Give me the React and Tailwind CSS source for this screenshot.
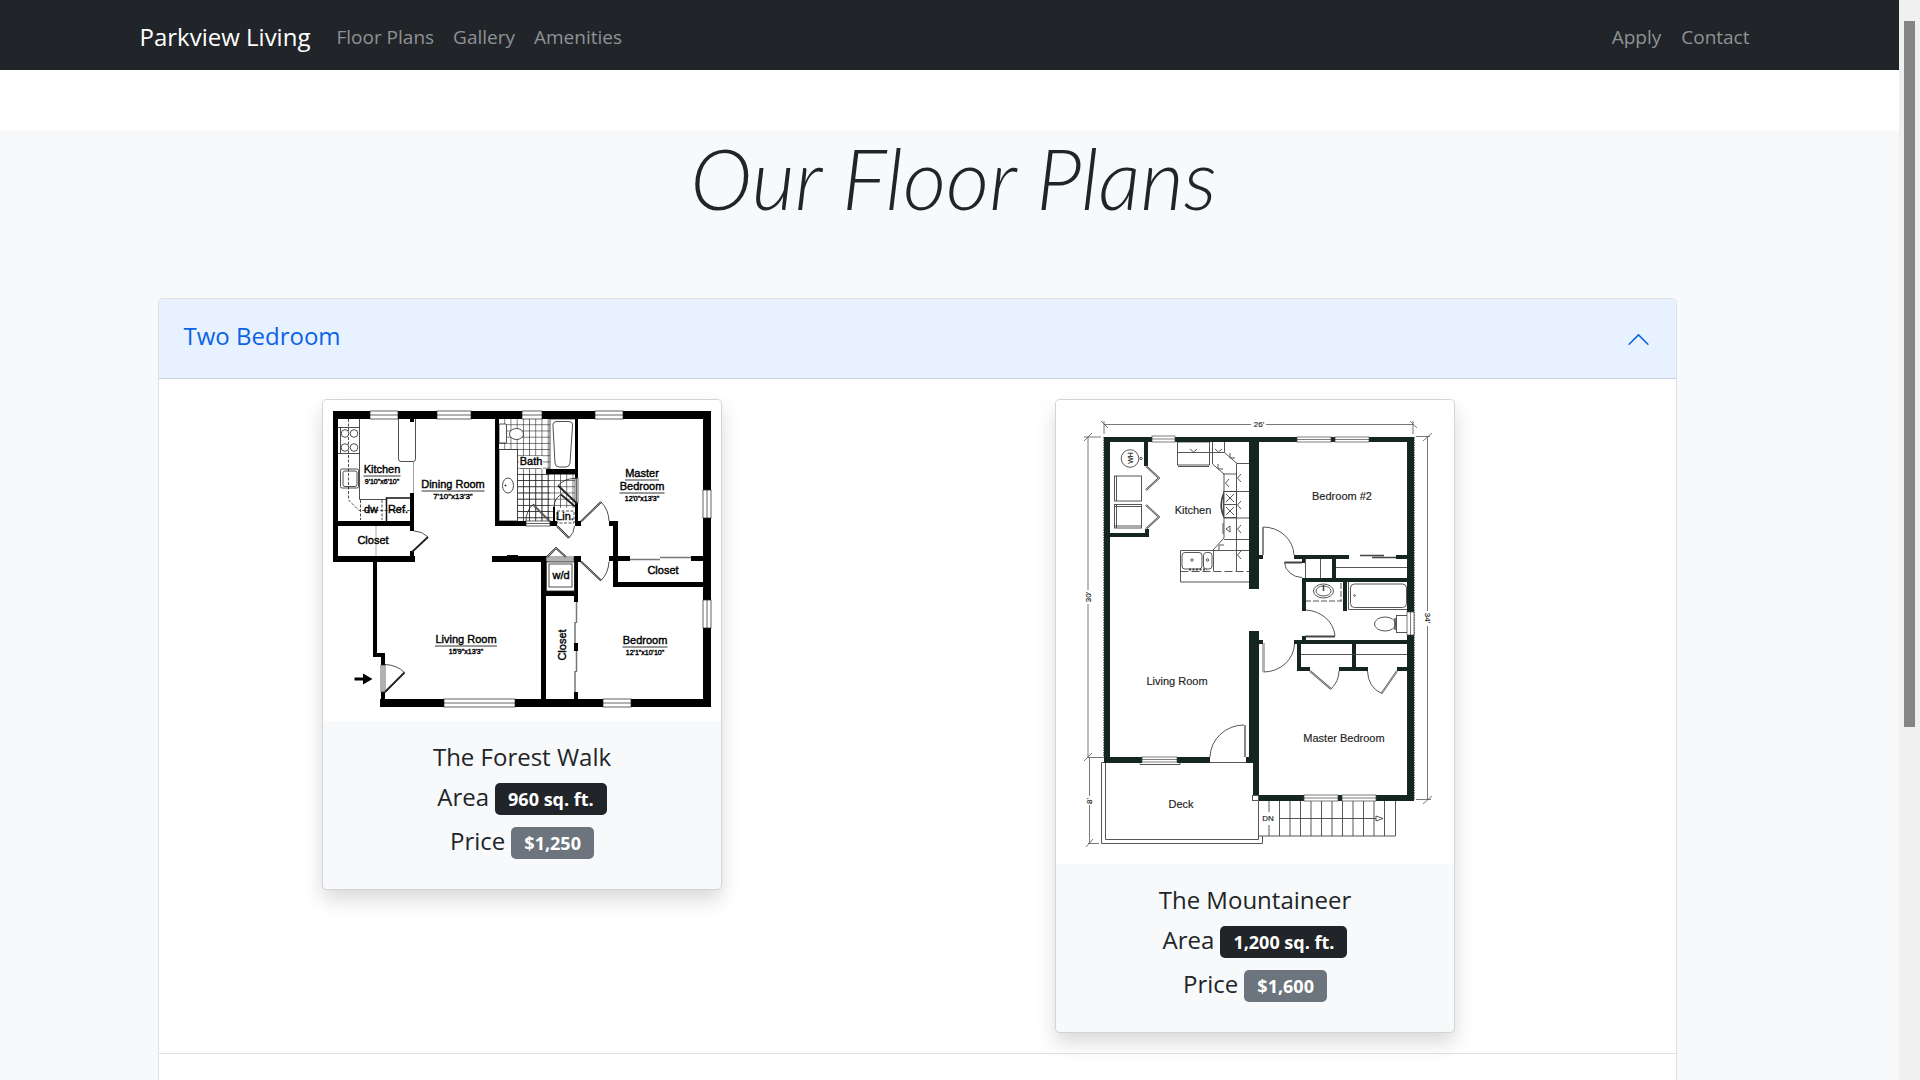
import { useState } from "react";

const INK = "#000";
const GREEN = "#14261f";

/* Filled wall segments, each given as [x, y, width, height]. */
function Walls({ items, fill }) {
  return items.map((w) => (
    <rect key={w.join()} x={w[0]} y={w[1]} width={w[2]} height={w[3]} fill={fill} />
  ));
}

/* A window: white gap in a wall crossed by thin glazing lines. */
function Windows({ items, stroke }) {
  return items.map(([x, y, w, h]) => (
    <g key={`${x}-${y}`} stroke={stroke} strokeWidth="0.7" fill="#fff">
      <rect x={x} y={y} width={w} height={h} />
      {w > h ? (
        <path d={`M${x} ${y + h / 2}h${w}`} />
      ) : (
        <path d={`M${x + w / 2} ${y}v${h}`} />
      )}
    </g>
  ));
}

function Room({ x, y, name, size, line, lineWidth }) {
  return (
    <g>
      <text x={x} y={y} textAnchor="middle">{name}</text>
      {lineWidth ? <path d={`M${x - lineWidth / 2} ${y + 3}h${lineWidth}`} stroke={INK} strokeWidth="0.8" /> : null}
      {size ? <text x={x} y={y + 11} textAnchor="middle" fontSize={line || 7}>{size}</text> : null}
    </g>
  );
}

function ForestWalkPlan() {
  return (
    <svg viewBox="323 400 398 321" className="block w-full bg-white" role="img" aria-label="The Forest Walk floor plan">
      <defs>
        <pattern id="tile" x="499" y="419" width="6.2" height="6.2" patternUnits="userSpaceOnUse">
          <path d="M0 6H6.2M6 0V6.2" stroke="#222" strokeWidth="0.8" fill="none" />
        </pattern>
      </defs>
      <g fill="url(#tile)">
        <rect x="499" y="419" width="51" height="102" />
        <rect x="518" y="474" width="57" height="47" />
      </g>
      <rect x="555" y="508" width="20" height="18" fill="#fff" />

      {/* bathroom fixtures */}
      <g fill="#fff" stroke="#222" strokeWidth="0.8">
        <rect x="499" y="449.500" width="18.500" height="71.500" />
        <ellipse cx="508" cy="485.500" rx="5.500" ry="7.500" />
        <rect x="499" y="424" width="7.500" height="19" rx="1" />
        <ellipse cx="516.500" cy="434" rx="7" ry="5.500" />
        <rect x="550" y="419" width="26" height="51" />
        <path d="M553 426Q552.500 421.500 557 421.500H568.500Q573 421.500 572.500 426L570 463Q569.500 467 566 467H559Q555.500 467 555 463Z" />
        <circle cx="505.500" cy="485.500" r="0.6" fill="#000" />
      </g>
      <rect x="519" y="456" width="24" height="13" fill="#fff" />
      <path d="M519.500 468.500h22" stroke="#333" strokeWidth="0.7" />

      {/* kitchen */}
      <g fill="none" stroke="#222" strokeWidth="0.8">
        <path d="M359.500 419V499.500H386M338 427.500H359.500M338 453.500H359.500M340.500 427.500V453.500" />
        <path d="M348.500 419V500L359 510.500H410M360.500 500V520M382 500V520" strokeDasharray="3 1.5" />
        <circle cx="345" cy="433.500" r="3.800" fill="#fff" />
        <circle cx="354" cy="433.500" r="3.800" fill="#fff" />
        <circle cx="345" cy="447.500" r="3.800" fill="#fff" />
        <circle cx="354" cy="447.500" r="3.800" fill="#fff" />
        <rect x="340.500" y="469" width="18" height="19" rx="1.500" />
        <rect x="343" y="471" width="14" height="15.500" rx="2" />
        <path d="M398.500 419V459Q398.500 461.500 401 461.500H413Q415.500 461.500 415.500 459V419" fill="#fff" />
        <path d="M413.500 461V493" stroke="#888" />
        <path d="M376 526V556" stroke="#999" />
      </g>
      <path d="M386.500 521V498H410" fill="none" stroke="#111" strokeWidth="1.500" />

      <Walls
        fill={INK}
        items={[
          [333, 411, 378, 8], [333, 411, 5, 151], [703, 411, 8, 296], [380, 699, 331, 8],
          [410, 419, 4, 3], [410, 493, 4, 38], [338, 521, 76, 5], [333, 556, 82, 6], [410, 551, 4, 6],
          [373, 562, 4, 95], [373, 653, 12, 4], [381, 656, 4, 9], [381, 692, 4, 8],
          [495, 419, 4, 107], [495, 521, 31, 5], [550, 521, 7, 5], [553, 507, 2, 14],
          [575, 419, 3, 59], [546, 469, 32, 5], [575, 503, 3, 23], [575, 521, 6, 5],
          [609, 521, 9, 5], [613, 521, 5, 66], [609, 556, 21, 5], [691, 556, 20, 5], [613, 582, 98, 5],
          [492, 556, 55, 6], [507, 555, 11, 2], [541, 556, 5, 146], [574, 556, 7, 6], [574, 561, 4, 41],
          [546, 591, 31, 5], [574, 643, 4, 8], [574, 692, 4, 8],
        ]}
      />
      <Windows
        stroke="#222"
        items={[
          [370, 411, 28, 8], [437, 411, 34, 8], [522, 411, 20, 8], [595, 411, 28, 8],
          [703, 490, 8, 28], [703, 600, 8, 28], [444, 699, 71, 8], [603, 699, 28, 8],
          [381, 665, 4, 27], [575, 478, 3, 25], [526, 521, 24, 5], [546, 557, 28, 4],
        ]}
      />

      {/* door leaves */}
      <g fill="none" stroke="#222" strokeWidth="1.800">
        <path d="M412 552L428 537M385 692L404.500 672.500M533 504.500L550 521.500M558 485.500L577 503.500M561 494.500L575 506.500" />
        <path d="M557 526L569 538M581 521.500L601 502M581 561.500L601 580.500M547 557L556 548L566 557" />
      </g>
      <g fill="none" stroke="#eee" strokeWidth="0.6">
        <path d="M557 526L569 538M581 521.500L601 502M581 561.500L601 580.500M547 557L556 548L566 557M533 504.500L550 521.500" />
      </g>
      {/* door swings */}
      <g fill="none" stroke="#222" strokeWidth="0.8">
        <path d="M414 531Q422 531 428 537M385 664.500Q397 665 404.500 672.500M526 521Q526 511 533 504.500M558 485.500Q565 478 576 478.500M561 494.500Q554 499 554 507M569 538Q574 533 574.500 526" />
        <path d="M601 502Q608.500 509 609 521M601 580.500Q608.500 573 609 561.500" />
        <path d="M557 511H574V523H557Z" strokeDasharray="3 1.500" />
        <rect x="546.500" y="562" width="28" height="29" />
        <rect x="549" y="564" width="23" height="23" />
      </g>
      <g stroke="#777" strokeWidth="1.500">
        <path d="M630 559.500H660M660 557.500H691M576.500 602V623M575 622V643M576.500 651V672M575 671V692" />
      </g>
      <path d="M354.500 677.500H363V673.500L372.500 679L363 684.500V680.500H354.500Z" fill="#000" />

      <g fontFamily="Liberation Sans, sans-serif" fontSize="11" fill="#000" stroke="#000" strokeWidth="0.4">
        <Room x={382} y={473} name="Kitchen" size={`9'10"x6'10"`} lineWidth={37} />
        <Room x={453} y={488} name="Dining Room" size={`7'10"x13'3"`} lineWidth={63} line={8} />
        <Room x={373} y={544} name="Closet" />
        <Room x={371} y={513} name="dw" />
        <Room x={398} y={513} name="Ref." />
        <Room x={531} y={465} name="Bath" />
        <Room x={565} y={520} name="Lin." />
        <Room x={642} y={477} name="Master" lineWidth={34} />
        <Room x={642} y={490} name="Bedroom" size={`12'0"x13'3"`} lineWidth={45} />
        <Room x={663} y={574} name="Closet" />
        <Room x={561} y={579} name="w/d" />
        <Room x={466} y={643} name="Living Room" size={`15'9"x13'3"`} lineWidth={62} />
        <Room x={645} y={644} name="Bedroom" size={`12'1"x10'10"`} lineWidth={45} />
        <text transform="translate(566 645) rotate(-90)" textAnchor="middle">Closet</text>
      </g>
    </svg>
  );
}

const STAIRS = [1269, 1279.5, 1290, 1300.5, 1311, 1321.5, 1332, 1342.5, 1353, 1363.5, 1374, 1384.5];

function MountaineerPlan() {
  return (
    <svg viewBox="1056 400 398 464" className="block w-full bg-white" role="img" aria-label="The Mountaineer floor plan">
      {/* dimension lines */}
      <g fill="none" stroke="#555" strokeWidth="0.8">
        <path d="M1104 424.500H1251M1266 424.500H1413M1104 421V434M1413 421V434M1101 421L1108 428M1410 421L1417 428" />
        <path d="M1088 437V590M1088 604V757M1084 441L1092 433M1084 437H1101M1084 761L1092 753M1087 757.500H1104" />
        <path d="M1089.500 758V796M1089.500 805V843M1086 847L1093 839M1088 843.500H1099" />
        <path d="M1427.500 437V611M1427.500 626V800M1423 441L1432 433M1416 436.500H1430M1423 804L1432 796M1416 799.500H1431" />
        <path d="M1103.500 437V757M1414.500 437V800" strokeDasharray="1.500 1" />
      </g>

      {/* kitchen and utility fixtures */}
      <g fill="none" stroke="#444" strokeWidth="0.9">
        <circle cx="1130" cy="458.500" r="8.800" />
        <circle cx="1141" cy="458.500" r="1.200" />
        <rect x="1114.500" y="476" width="27" height="25" />
        <path d="M1116.500 476V501" />
        <rect x="1114.500" y="504.500" width="27" height="23.500" />
        <path d="M1116.500 504V528M1114 506.500H1141M1114 526H1141" />
        <rect x="1177.500" y="442" width="32" height="23" />
        <path d="M1177.500 452.500H1224.500V442M1178 466.500H1209" />
        <path d="M1190 449L1193.500 452L1197 449M1215 449L1218.500 452L1222 449" />
        <path d="M1212.500 442V464L1224 474V538L1213 550M1224.500 452.500L1237 463.500H1249M1236.500 463.500V571" />
        <path d="M1224 491.500H1249M1224 518H1249M1224 539.500H1249M1213 550.500H1249M1223 474H1237" />
        <path d="M1218 464V469H1223M1230 453V458H1235M1219 550V545H1224" />
        <path d="M1241 474L1237.500 478L1241 482M1229 479L1225.500 483L1229 487M1241 501L1237.500 505L1241 509M1241 525L1237.500 529L1241 533M1241 551L1237.500 555L1241 559" />
        <path d="M1223.500 491.500H1236.500V517.500H1223.500ZM1223.500 504.500H1236.500M1226 494L1234 502M1234 494L1226 502M1226 507L1234 515M1234 507L1226 515" />
        <path d="M1223.500 494Q1219 505 1223.500 516" strokeWidth="1.800" />
        <path d="M1223 523V534M1230 526L1226 529L1230 532Z" />
        <path d="M1180.500 550.500V582H1249M1180.500 550.500H1213.500V571" />
        <path d="M1180.500 571.500H1249" strokeDasharray="8 3" />
        <rect x="1182" y="552.500" width="20" height="16.500" rx="3" />
        <rect x="1203.500" y="552.500" width="8.500" height="16.500" rx="3" />
        <circle cx="1192" cy="560" r="1.200" />
        <circle cx="1207.500" cy="560" r="1.200" />
        <path d="M1189 569.500H1207" strokeWidth="2" strokeDasharray="2 1.500" />
      </g>

      {/* bathroom fixtures */}
      <g fill="none" stroke="#444" strokeWidth="0.9">
        <ellipse cx="1323.500" cy="591" rx="10" ry="7" />
        <ellipse cx="1323.500" cy="591" rx="7.500" ry="5" />
        <path d="M1323.500 585V591" strokeWidth="1.500" />
        <path d="M1305 601H1342M1341 583V601" strokeDasharray="6 2" />
        <path d="M1348.500 582V609.500H1407" />
        <rect x="1350.500" y="584" width="56" height="23.500" rx="4" />
        <circle cx="1354.500" cy="595.500" r="0.8" />
        <ellipse cx="1385" cy="624" rx="10.500" ry="7" />
        <rect x="1396.500" y="615.500" width="11" height="17" />
        <path d="M1395 618V630" strokeWidth="1.500" />
      </g>

      <Walls
        fill={GREEN}
        items={[
          [1104, 437, 6, 326], [1104, 437, 310, 5], [1249, 437, 10, 152], [1249, 631, 10, 130],
          [1253, 757, 6, 38], [1407, 437, 7, 364], [1259, 795, 155, 6],
          [1104, 757, 38, 6], [1177, 757, 33, 6], [1246, 757, 8, 6],
          [1144, 442, 4, 24], [1110, 533, 39, 4], [1145, 529, 4, 8],
          [1294, 555, 55, 4], [1396, 555, 18, 4], [1258, 555, 5, 4], [1302, 558, 3, 5],
          [1332, 559, 4, 20], [1302, 578, 112, 4], [1302, 578, 4, 33], [1343, 582, 4, 29],
          [1302, 636, 4, 5], [1294, 640, 113, 4], [1258, 640, 5, 4],
          [1297, 644, 4, 27], [1352, 644, 4, 27], [1297, 667, 13, 4], [1339, 667, 29, 4], [1397, 667, 17, 4],
        ]}
      />
      <Windows
        stroke="#444"
        items={[
          [1152, 436, 23, 6], [1297, 437, 34, 5], [1335, 437, 34, 5], [1407, 612, 7, 23],
          [1304, 795, 34, 6], [1342, 795, 34, 6], [1142, 757, 35, 5],
        ]}
      />

      {/* doors, closets, deck and stairs */}
      <g fill="none" stroke="#444" strokeWidth="0.9">
        <path d="M1146 466L1159 478L1146 490M1146 505L1159 517L1146 529" strokeWidth="1.800" />
        <path d="M1263 527V555M1263.500 643V672M1245 725V757M1305 636.500H1335M1284.500 562.500H1302M1310 671L1331 689M1397 671L1381.500 693.500" strokeWidth="1.800" />
        <path d="M1263 527A31 29 0 0 1 1294 555M1263.500 672A31 29 0 0 0 1294.500 644M1244 725A34 33 0 0 0 1210 757M1306 610A31 28 0 0 1 1335 636M1284.500 562.500A18 16 0 0 0 1302 577.500" />
        <path d="M1331 689Q1339 681 1339 671M1381.500 693.500Q1368 687 1367.500 671" />
        <path d="M1210 762.500H1246M1140 763.500V764.500H1180V763" />
        <path d="M1305.500 559V578M1320.500 559V578M1336 567.500H1407M1301 654.500H1407" />
        <path d="M1360 555.500H1384M1372 557.500H1396" strokeWidth="1.500" />
        <path d="M1104 762.500H1101.500V843.500H1262.500V836M1105.500 763V839.500H1258.500V801" />
        <rect x="1252.500" y="795.500" width="6" height="5" fill="#fff" />
        <path d="M1258.500 836H1395.500V801" />
        {STAIRS.map((x) => (
          <path key={x} d={x === 1269 ? "M1269 801V812M1269 825V836" : `M${x} 801V836`} />
        ))}
        <path d="M1280 818.500H1376M1376 816L1383 818.500L1376 821Z" />
      </g>
      <g stroke="#fff" strokeWidth="0.6" fill="none">
        <path d="M1146 466L1159 478L1146 490M1146 505L1159 517L1146 529M1263 527V555M1263.500 643V672M1245 725V757M1310 671L1331 689M1397 671L1381.500 693.500" />
      </g>

      <g fontFamily="Liberation Sans, sans-serif" fontSize="11" fill="#222" stroke="#222" strokeWidth="0.15" textAnchor="middle">
        <text x="1193" y="514">Kitchen</text>
        <text x="1342" y="500">Bedroom #2</text>
        <text x="1177" y="685">Living Room</text>
        <text x="1344" y="742">Master Bedroom</text>
        <text x="1181" y="808">Deck</text>
        <g fontSize="8">
          <text x="1259" y="427">26'</text>
          <text x="1268" y="821">DN</text>
          <text transform="translate(1091 597) rotate(-90)">30'</text>
          <text transform="translate(1092 801) rotate(-90)">8'</text>
          <text transform="translate(1425 618) rotate(90)">34'</text>
          <text transform="translate(1133 458) rotate(-90)" fontSize="7">WH</text>
        </g>
      </g>
    </svg>
  );
}

function PlanCard({ plan, name, area, price }) {
  return (
    <article className="w-[400px] overflow-hidden rounded-[5px] border border-black/15 bg-[#f8f9fa] shadow-[0_10px_20px_rgba(0,0,0,0.15)]">
      {plan}
      <div className="px-5 pt-5 pb-[30px] text-center text-2xl text-[#212529]">
        <h2 className="leading-[32px]">{name}</h2>
        <p className="mt-2 flex items-baseline justify-center gap-[6px] leading-[32px]">
          Area
          <span className="rounded-[5px] bg-[#212529] px-[13px] text-lg leading-[32px] font-bold text-white">{area}</span>
        </p>
        <p className="mt-[10px] flex items-baseline justify-center gap-[6px] leading-[32px]">
          Price
          <span className="rounded-[5px] bg-[#6c757d] px-[13px] text-lg leading-[32px] font-bold text-white">{price}</span>
        </p>
      </div>
    </article>
  );
}

export default function App() {
  const [open, setOpen] = useState(true);
  return (
    <div className="flex h-screen overflow-hidden bg-white font-['Open_Sans',sans-serif] text-[#212529]">
      <div className="flex min-w-0 flex-1 flex-col">
        <header className="shrink-0 bg-[#212529]">
          <nav className="mx-auto flex h-[70px] max-w-[1650px] items-center px-[15px] pt-1 text-[19px] text-[#909294]">
            <a href="#" className="mr-[26px] text-2xl text-white">Parkview Living</a>
            <div className="flex gap-[19px]">
              <a href="#plans">Floor Plans</a>
              <a href="#gallery">Gallery</a>
              <a href="#amenities">Amenities</a>
            </div>
            <div className="mr-[10px] ml-auto flex gap-5">
              <a href="#apply">Apply</a>
              <a href="#contact">Contact</a>
            </div>
          </nav>
        </header>

        <main id="plans" className="mt-[60px] flex-1 bg-[#f8f9fa]">
          <h1 className="h-[168px] pt-2 pl-2 text-center font-['Lato',sans-serif] text-[84px] leading-[80px] font-light italic">
            Our Floor Plans
          </h1>
          <div className="mx-auto max-w-[1650px] pr-[98px] pl-[33px]">
            <section className="rounded-t-[5px] border border-[#dfe0e1] bg-white">
              <h2>
                <button
                  type="button"
                  aria-expanded={open}
                  onClick={() => setOpen(!open)}
                  className="flex h-[80px] w-full items-center justify-between rounded-t-[4px] border-b border-[#c6d3e2] bg-[#e7f1ff] px-[25px] pb-[2px] text-2xl text-[#0c63e4]"
                >
                  <span className="pb-1">Two Bedroom</span>
                  <svg viewBox="0 0 16 16" className="mt-1 size-[25px]" fill="#0c63e4" aria-hidden="true">
                    <path
                      fillRule="evenodd"
                      d="M14.354 11.354a.5.5 0 0 1-.708 0L8 5.707l-5.646 5.647a.5.5 0 0 1-.708-.708l6-6a.5.5 0 0 1 .708 0l6 6a.5.5 0 0 1 0 .708z"
                    />
                  </svg>
                </button>
              </h2>
              {open && (
                <div className="grid grid-cols-2 items-start py-5 pr-[26px] pl-[25px]">
                  <div className="flex justify-center pr-14">
                    <PlanCard plan={<ForestWalkPlan />} name="The Forest Walk" area="960 sq. ft." price="$1,250" />
                  </div>
                  <div className="flex justify-center pr-14">
                    <PlanCard plan={<MountaineerPlan />} name="The Mountaineer" area="1,200 sq. ft." price="$1,600" />
                  </div>
                </div>
              )}
              <div className="h-[80px] border-t border-[#dfe0e1] bg-white" />
            </section>
          </div>
        </main>
      </div>

      <div className="flex w-[21px] shrink-0 flex-col items-center bg-[#f0f0f0] pt-[21px]" aria-hidden="true">
        <div className="h-2/3 w-[11px] bg-[#858585]" />
      </div>
    </div>
  );
}
